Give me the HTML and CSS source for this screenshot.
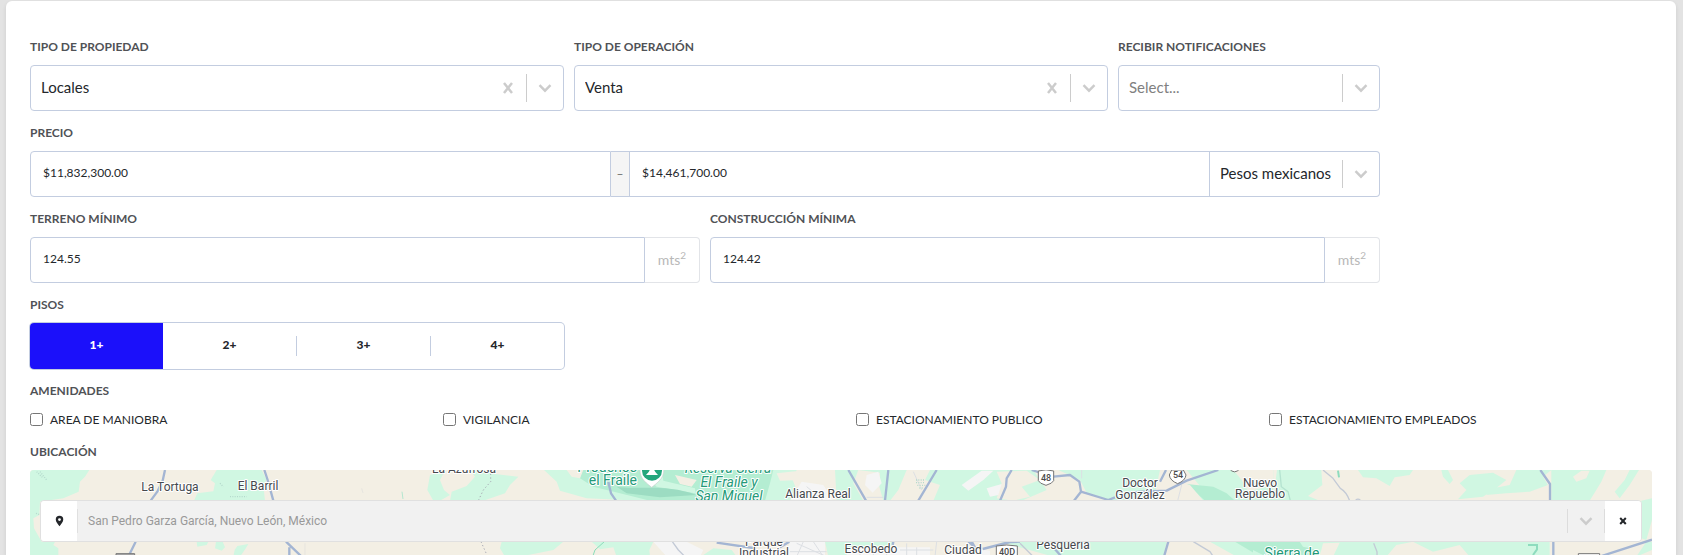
FILE: index.html
```html
<!DOCTYPE html>
<html lang="es">
<head>
<meta charset="utf-8">
<title>Búsqueda de propiedades</title>
<link rel="stylesheet" href="styles.css">
</head>
<body>
<svg class="defs" width="0" height="0" aria-hidden="true">
  <symbol id="chevron" viewBox="0 0 20 20"><path d="M4.5 7.2 10 12.7l5.5-5.5" fill="none" stroke="currentColor" stroke-width="2.4"/></symbol>
  <symbol id="cross" viewBox="0 0 20 20"><path d="M6 5 14 15M14 5 6 15" fill="none" stroke="currentColor" stroke-width="2.5"/></symbol>
</svg>
<form class="card">
  <div class="grid">
    <div class="field span-4">
      <label class="label" for="tipo">TIPO DE PROPIEDAD</label>
      <div class="picker">
        <select id="tipo" class="picker-select"><option>Locales</option></select>
        <button type="button" class="clear" aria-label="Borrar tipo de propiedad"><svg class="icon"><use href="#cross"/></svg></button>
        <span class="arrow"><svg class="icon"><use href="#chevron"/></svg></span>
      </div>
    </div>
    <div class="field span-4">
      <label class="label" for="operacion">TIPO DE OPERACIÓN</label>
      <div class="picker">
        <select id="operacion" class="picker-select"><option>Venta</option></select>
        <button type="button" class="clear" aria-label="Borrar tipo de operación"><svg class="icon"><use href="#cross"/></svg></button>
        <span class="arrow"><svg class="icon"><use href="#chevron"/></svg></span>
      </div>
    </div>
    <div class="field span-2">
      <label class="label" for="notificaciones">RECIBIR NOTIFICACIONES</label>
      <div class="picker">
        <select id="notificaciones" class="picker-select is-empty"><option>Select...</option></select>
        <span class="arrow"><svg class="icon"><use href="#chevron"/></svg></span>
      </div>
    </div>
    <div class="field span-10">
      <label class="label" for="precio-min">PRECIO</label>
      <div class="group">
        <input id="precio-min" class="text group-first" type="text" value="$11,832,300.00">
        <span class="dash">–</span>
        <input class="text group-middle" type="text" value="$14,461,700.00" aria-label="Precio máximo">
        <div class="picker currency">
          <select class="picker-select" aria-label="Moneda"><option>Pesos mexicanos</option></select>
          <span class="arrow"><svg class="icon"><use href="#chevron"/></svg></span>
        </div>
      </div>
    </div>
    <div class="field span-5">
      <label class="label" for="terreno">TERRENO MÍNIMO</label>
      <div class="group">
        <input id="terreno" class="text group-first" type="text" value="124.55">
        <span class="unit"><span>mts<sup>2</sup></span></span>
      </div>
    </div>
    <div class="field span-5">
      <label class="label" for="construccion">CONSTRUCCIÓN MÍNIMA</label>
      <div class="group">
        <input id="construccion" class="text group-first" type="text" value="124.42">
        <span class="unit"><span>mts<sup>2</sup></span></span>
      </div>
    </div>
    <div class="field span-4">
      <span class="label" id="pisos">PISOS</span>
      <div class="segments" role="group" aria-labelledby="pisos">
        <button type="button" class="segment is-active" aria-pressed="true">1+</button>
        <button type="button" class="segment">2+</button>
        <button type="button" class="segment ruled">3+</button>
        <button type="button" class="segment ruled">4+</button>
      </div>
    </div>
  </div>
  <div class="field" role="group" aria-labelledby="amenidades">
    <span class="label" id="amenidades">AMENIDADES</span>
    <div class="amenities">
      <label class="check"><input type="checkbox" class="box">AREA DE MANIOBRA</label>
      <label class="check"><input type="checkbox" class="box">VIGILANCIA</label>
      <label class="check"><input type="checkbox" class="box">ESTACIONAMIENTO PUBLICO</label>
      <label class="check"><input type="checkbox" class="box">ESTACIONAMIENTO EMPLEADOS</label>
    </div>
  </div>
  <div class="field location">
    <label class="label" for="ubicacion">UBICACIÓN</label>
    <div class="map">
      <svg class="map-art" viewBox="0 0 1622 85" preserveAspectRatio="xMidYMin slice" aria-hidden="true">
        <rect width="1622" height="85" fill="#f3efe4"/>
        <g transform="translate(-30 -10) scale(.33333)">
          <path class="park" d="M90 30H268L255 50L240 65L236 95L190 115L120 125L118 165L100 175L102 205L125 245H165L160 255L175 265V290H90Z"/>
          <path class="park" d="M650 30H785L800 60L790 75L795 122H582L592 100L640 94L645 70L632 60Z"/>
          <path class="park" d="M590 245H625L620 255L592 260ZM648 245H668L675 262L665 272L645 265ZM712 258L745 252L738 264L720 290H700L704 270Z"/>
          <path class="road" d="M495 30L488 62L472 95L452 122M407 245L385 290M793 30L803 60L820 122M858 245L905 290M868 262V290"/>
          <path class="sand" d="M110 35l20 20M120 35l20 25M690 110h50M660 70l10 10M108 160l12 4"/>
          <path d="M1085 85l4 14M915 250v40" fill="none" stroke="#e0e0dc" stroke-width="2"/>
          <path d="M1206 95l3 22" fill="none" stroke="#b4e6cf" stroke-width="3"/>
          <path d="M348 290V281H404V290Z" fill="#a8a8a8" stroke="#777" stroke-width="3"/>
        </g>
        <g transform="translate(390 -10) scale(.33333)">
          <path class="park" d="M30 45L75 32L60 60L72 90L90 105L60 122H40L22 90ZM150 30H222L225 42L295 50L270 75L255 100L190 122H90L95 95L140 78L165 50ZM372 30H1130L1118 60L1130 90L1110 122H660L500 115L420 92L410 65Z"/>
          <path class="park" d="M245 245H430L400 270L300 290H255L240 265ZM515 245H700L688 270L690 290H590L580 262L540 268ZM850 285L880 265L935 270L950 290ZM1215 245H1290V290H1225Z"/>
          <path class="forest" d="M485 30H660L710 80L825 100L845 122H690L600 100L520 80L480 55ZM725 30H1060L1050 70L1035 122H830L825 85L730 62Z"/>
          <path d="M590 80C650 90 740 70 830 105L720 112L620 100Z" fill="#9cdcc2"/>
          <path d="M765 45L830 60L815 80L780 72ZM1070 40L1140 32L1150 60L1080 62ZM440 30H490L480 55L455 50ZM1220 45L1260 35L1290 90V122H1220Z" fill="#f3efe4"/>
          <path d="M1145 65L1210 75L1240 122H1110ZM700 245H800L850 270L840 290H740ZM1110 245H1215V290H1100Z" fill="#f5f5f5"/>
          <path class="street" d="M1130 250L1220 290M1150 245L1130 290M1180 245L1210 290M1110 275H1220M1160 80L1210 122"/>
          <path class="road" d="M565 66L573 100L588 122M890 248L1000 264M1108 245L1080 262M1280 30L1290 50"/>
          <path d="M757 245L775 270L795 290" class="road thin"/>
          <path d="M553 245L525 270L518 290" fill="none" stroke="#8adcb9" stroke-width="3"/>
          <path class="trail" stroke-dasharray="4 7" d="M212 30V65L190 90L175 122M183 245L203 290"/>
          <path class="pin-drop" d="M661 18C655 50 672 64 695 82C718 64 737 50 730 18Z"/>
          <circle cx="696" cy="32" r="30" fill="#24a67d"/>
          <path d="M678 45H714L706 36L696 18L686 36Z" fill="#fff"/>
        </g>
        <g transform="translate(810 -10) scale(.33333)">
          <path class="park" d="M-15 30H215L235 85L180 122H-10ZM265 30H580L620 90L545 122H245L215 85ZM655 30H960L940 122H820L740 98L720 60ZM1040 30H1300V122H1050L1090 90Z"/>
          <path class="park" d="M-10 245H160L150 262H0ZM480 245H980L970 290H640ZM1110 245H1300V290H1190Z"/>
          <path class="forest" d="M1040 72L1120 80L1160 100L1185 122H1095ZM1185 245H1300V290H1260Z"/>
          <path d="M55 30L120 38L118 80L130 122H70L40 70ZM200 30H270L255 60L300 75L280 122H150L175 90ZM470 35L560 32L600 60L545 80L570 110L520 122L470 115L485 70ZM660 70L710 75L760 122H690ZM1000 60L1050 75L1090 122H975ZM1180 30H1300V75L1225 95L1205 60ZM285 245H400L360 290H290ZM985 245H1110L1150 290H1000Z" fill="#f3efe4"/>
          <path d="M80 45L115 35L125 70L98 98L75 75ZM365 75L425 32H460L430 60L385 92ZM440 85L485 72L475 105L450 110ZM20 262H270V290H20ZM380 262L450 272V290H380Z" fill="#f5f5f5"/>
          <path class="street" d="M60 270V290M100 262V290M140 262V290M200 250V290M230 262V290M180 270H280M290 245L285 290M80 112H130M220 35L245 90M725 30V55M1025 75L1013 122"/>
          <path class="sand" d="M228 60l28 0M228 68l28 0M232 76l24 0M238 84l14 0"/>
          <path class="road" d="M25 30L78 122M145 30L135 122M290 30L235 122M515 30L500 55L498 80L480 122M575 30L600 38M640 50L690 45L718 65L723 95L702 122M723 95L805 120L825 112M960 65L978 30M870 98L905 95L980 92L1040 62L1135 30M385 245L405 262L395 245M428 267L510 246L540 245M645 268L665 290M985 245L972 290M160 245l-2 10"/>
          <path class="road thin" d="M540 250L580 290M1060 245L1110 275L1120 290"/>
          <path class="shield" d="M595 33Q618 26 641 33V62Q638 70 618 76Q598 70 595 62Z"/>
          <path class="shield" d="M988 45L995 30H1030L1038 45Q1036 62 1013 71Q990 62 988 45Z"/>
          <path class="shield" d="M469 258Q500 252 532 258V300H469ZM1168 26Q1183 45 1200 26Z"/>
        </g>
        <g transform="translate(1223 -10) scale(.33333)">
          <path class="park" d="M72 30H205L208 75L165 108L200 122H60ZM315 30H480L470 45L425 52L410 78L370 55L330 52ZM565 30H585L600 60L590 72L570 50ZM650 45L720 38L760 60L735 80L690 110L615 118L640 90L620 70ZM790 30H895L870 50L885 75L830 95L760 100L700 105L720 85L770 75ZM895 30H1060L1045 65L1010 122H895ZM1130 30H1158L1130 75L1100 115L1085 95L1115 60Z"/>
          <path class="park" d="M1165 122L1197 115V180L1180 240L1165 235ZM0 245H480L430 255L400 290H0ZM480 245H890V290H650L620 255L540 275ZM1180 245H1197V270L1150 290Z"/>
          <path d="M960 50L985 32H1010L1000 55L970 65ZM210 250L260 248L240 290H200Z" fill="#f3efe4"/>
          <path class="forest" d="M0 245H140L150 260L195 270L200 290H40L0 270Z"/>
          <path class="road" d="M862 30L891 72V122M901 245V290M1040 290L1197 239"/>
          <path class="road thin" d="M210 30L240 55L262 85Q280 95 290 122M362 250L372 275V290M308 120Q315 115 322 120"/>
          <path d="M80 30L85 80L105 95L112 122" fill="none" stroke="#b5e3d0" stroke-width="4"/>
          <path d="M825 255H852V268L840 285M255 32l3 20" fill="none" stroke="#8edcbe" stroke-width="6"/>
          <path class="shield" d="M976 281H1040V300H976Z"/>
        </g>
        <g class="place">
          <text x="140" y="21" text-anchor="middle">La Tortuga</text>
          <text x="228" y="20" text-anchor="middle">El Barril</text>
          <text x="434" y="3" text-anchor="middle">La Azufrosa</text>
          <text x="788" y="28" text-anchor="middle">Alianza Real</text>
          <text x="734" y="76" text-anchor="middle">Parque</text>
          <text x="734" y="87" text-anchor="middle">Industrial</text>
          <text x="841" y="83" text-anchor="middle">Escobedo</text>
          <text x="933" y="84" text-anchor="middle">Ciudad</text>
          <text x="1033" y="79" text-anchor="middle">Pesquería</text>
          <text x="1110" y="17" text-anchor="middle">Doctor</text>
          <text x="1110" y="29" text-anchor="middle">González</text>
          <text x="1230" y="17" text-anchor="middle">Nuevo</text>
          <text x="1230" y="28" text-anchor="middle">Repueblo</text>
        </g>
        <g class="place green">
          <text x="607" y="2" text-anchor="end">Prodenos</text>
          <text x="607" y="15" text-anchor="end">el Fraile</text>
          <text x="1262" y="88" text-anchor="middle">Sierra de</text>
        </g>
        <g class="place green reserve">
          <text x="698" y="3" text-anchor="middle">Reserva Sierra</text>
          <text x="699" y="17" text-anchor="middle">El Fraile y</text>
          <text x="699" y="31" text-anchor="middle">San Miguel</text>
        </g>
        <g class="route">
          <text x="1016" y="11" text-anchor="middle">48</text>
          <text x="1148" y="8" text-anchor="middle">54</text>
          <text x="977" y="85" text-anchor="middle">40D</text>
        </g>
      </svg>
      <div class="search">
        <button type="button" class="end" aria-label="Usar mi ubicación"><svg class="pin" viewBox="0 0 12 16"><path fill-rule="evenodd" d="M6 1A5 5 0 0 0 1 6C1 9 3.500 11.500 6 15C8.500 11.500 11 9 11 6A5 5 0 0 0 6 1ZM6 4.200A1.900 1.900 0 1 1 6 8A1.900 1.900 0 1 1 6 4.200Z"/></svg></button>
        <select id="ubicacion" class="place-select" disabled><option>San Pedro Garza García, Nuevo León, México</option></select>
        <span class="arrow slim"><svg class="icon"><use href="#chevron"/></svg></span>
        <button type="button" class="end" aria-label="Quitar ubicación"><svg class="close" viewBox="0 0 8 8"><path d="M1.200 1 6.800 7M6.800 1 1.200 7" fill="none" stroke="currentColor" stroke-width="2"/></svg></button>
      </div>
    </div>
  </div>
</form>
</body>
</html>
```
FILE: styles.css
```css
* { box-sizing: border-box; }

body {
  margin: 0;
  padding: 1px 7px 0 6px;
  background: #e3e3e3;
  color: #24272b;
  font-family: Lato, "Open Sans", sans-serif;
  font-size: 14px;
  line-height: 20px;
}

button, input, select { font: inherit; color: inherit; margin: 0; }
button { cursor: pointer; }

.defs { position: absolute; }

.card {
  display: flex;
  flex-direction: column;
  gap: 12px;
  min-height: calc(100vh - 1px);
  padding: 36px 24px 0;
  background: #fff;
  border-radius: 6px 6px 0 0;
  box-shadow: 0 2px 4px rgba(0, 0, 0, .1);
}

.grid {
  display: grid;
  grid-template-columns: repeat(12, minmax(0, 1fr));
  gap: 12px 10px;
}

.span-2 { grid-column: span 2; }
.span-4 { grid-column: span 4; }
.span-5 { grid-column: span 5; }
.span-10 { grid-column: 1 / span 10; }
.span-10 + .span-5 { grid-column: 1 / span 5; }
.span-5 + .span-4 { grid-column: 1 / span 4; }

.field { display: flex; flex-direction: column; gap: 8px; min-width: 0; }

.label {
  color: #505256;
  font-size: 12px;
  font-weight: 700;
  white-space: nowrap;
}

.picker {
  display: flex;
  align-items: center;
  height: 46px;
  border: 1px solid #c3cde0;
  border-radius: 4px;
  background: #fff;
}

.picker-select {
  flex: 1;
  min-width: 0;
  height: 100%;
  padding: 0 0 3px 10px;
  border: 0;
  background: none;
  appearance: none;
  font-size: 15px;
}

.picker-select.is-empty { color: #808080; }

.clear {
  display: flex;
  padding: 8px;
  border: 0;
  background: none;
  color: #ccc;
}

.icon { display: block; width: 20px; height: 20px; }

.arrow {
  display: flex;
  padding: 4px 8px;
  border-left: 1px solid #ccc;
  color: #ccc;
  pointer-events: none;
}

.group { display: flex; height: 46px; }

.text {
  flex: 1;
  min-width: 0;
  padding: 0 12px 3px;
  border: 1px solid #c3cde0;
  background: #fff;
  font-size: 12px;
}

.group-first { border-radius: 4px 0 0 4px; }

.dash {
  display: flex;
  align-items: center;
  justify-content: center;
  width: 18px;
  border: solid #c3cde0;
  border-width: 1px 0;
  background: #f5f5f5;
  color: #666;
  font-size: 12px;
}

.currency {
  width: 170px;
  border-left: 0;
  border-radius: 0 4px 4px 0;
}

.unit {
  display: flex;
  align-items: center;
  justify-content: center;
  width: 55px;
  border: 1px solid #e2e4e8;
  border-left: 0;
  border-radius: 0 4px 4px 0;
  color: #b8b8b8;
}

.unit sup { font-size: 10px; line-height: 0; }

.segments {
  display: flex;
  align-items: center;
  height: 46px;
  border-radius: 4px;
  box-shadow: 0 0 0 1px #c3cde0;
  overflow: hidden;
}

.segment {
  flex: 1;
  height: 20px;
  padding: 0 0 2px;
  border: 0;
  background: none;
  font-size: 12px;
  font-weight: 900;
  line-height: 18px;
}

.segment.ruled { border-left: 1px solid #c3cde0; }
.segment.is-active { height: 100%; background: #1b10fa; color: #fff; }

.amenities {
  display: grid;
  grid-template-columns: repeat(4, minmax(0, 1fr));
  column-gap: 30px;
}

.check {
  display: flex;
  align-items: center;
  gap: 7px;
  height: 21px;
  font-size: 12px;
  white-space: nowrap;
}

.box { width: 13px; height: 13px; }

.location { flex: 1; }

.map {
  position: relative;
  flex: 1;
  min-height: 85px;
  padding: 30px 10px 0;
  border-radius: 4px 4px 0 0;
  background: #f3efe4;
  overflow: hidden;
}

.map-art {
  position: absolute;
  inset: 0;
  width: 100%;
  height: 100%;
  font-family: Roboto, sans-serif;
}

.park { fill: #d0f7e2; }
.forest { fill: #b4edd2; }
.road { fill: none; stroke: #a3b5d3; stroke-width: 7; stroke-linejoin: round; }
.road.thin { stroke: #c3cad6; stroke-width: 4; }
.street { fill: none; stroke: #dcdfe3; stroke-width: 3; }
.sand { fill: none; stroke: #b4d9cc; stroke-width: 4; stroke-dasharray: 3 4; }
.trail { fill: none; stroke: #a7a9b4; stroke-width: 3; }
.shield { fill: #fff; stroke: #747474; stroke-width: 3; }
.pin-drop { fill: #fff; stroke: #c7d2cd; stroke-width: 2; }

.place text {
  fill: #45484d;
  font-size: 12px;
  stroke: #fff;
  stroke-width: 2px;
  stroke-linejoin: round;
  paint-order: stroke;
}

.green text { fill: #249a78; font-size: 14px; }
.reserve text { font-style: italic; }
.route text { fill: #4a4a4a; font-size: 9px; font-weight: 500; }

.search {
  position: relative;
  display: flex;
  align-items: center;
  height: 42px;
  border: 1px solid #e0e0e0;
  border-radius: 4px;
  background: #f1f1f1;
  overflow: hidden;
}

.end {
  display: flex;
  align-items: center;
  justify-content: center;
  width: 36px;
  height: 100%;
  padding: 0;
  border: 0;
  background: #fff;
}

.pin { width: 9px; height: 12px; fill: #24272b; }
.close { width: 8px; height: 8px; }

.place-select {
  flex: 1;
  min-width: 0;
  height: 24px;
  padding: 0 0 0 10px;
  border: 0;
  border-left: 1px solid #e0e0e0;
  background: none;
  color: #999;
  opacity: 1;
  appearance: none;
  font-family: Roboto, sans-serif;
  font-size: 12px;
}

.arrow.slim {
  padding: 2px 8px;
  border-left-color: #dcdcdc;
  border-right: 1px solid #dcdcdc;
}
```
